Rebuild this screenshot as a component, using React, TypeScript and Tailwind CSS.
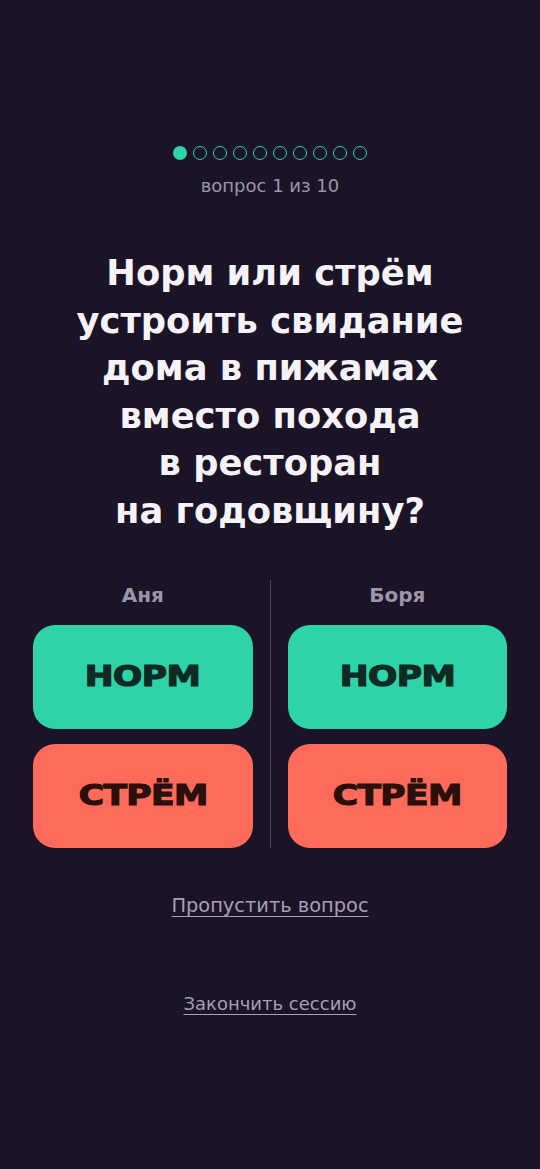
import React from "react";

const Btn = ({ label, kind }: { label: string; kind: "ok" | "no" }) => (
  <button
    className={
      kind === "ok"
        ? "h-[104px] w-full rounded-[22px] bg-[#2ed3a9] text-[#0f2a22] flex items-center justify-center"
        : "h-[104px] w-full rounded-[22px] bg-[#ff6b5b] text-[#2b0f0b] flex items-center justify-center"
    }
  >
    <span
      className="inline-block scale-x-[1.19] text-[29px] font-bold tracking-[-0.5px] [-webkit-text-stroke:1.2px_currentColor]"
      style={{ fontFamily: '"DejaVu Sans", sans-serif' }}
    >
      {label}
    </span>
  </button>
);

const Column = ({ name }: { name: string }) => (
  <div className="flex flex-col">
    <div className="h-[45px] flex items-start justify-center pt-[3px] text-[20px] leading-[24px] font-bold text-[#9d95aa]">
      {name}
    </div>
    <div className="flex flex-col gap-[15px]">
      <Btn label="НОРМ" kind="ok" />
      <Btn label="СТРЁМ" kind="no" />
    </div>
  </div>
);

export default function App() {
  return (
    <div
      className="min-h-[1169px] w-full bg-[#1a1426] flex flex-col items-center"
      style={{ fontFamily: '"DejaVu Sans", sans-serif' }}
    >
      <div className="mt-[146px] flex gap-[6px]">
        {Array.from({ length: 10 }).map((_, i) => (
          <div
            key={i}
            className={
              i === 0
                ? "h-[14px] w-[14px] rounded-full bg-[#2ed3a9]"
                : "h-[14px] w-[14px] rounded-full border-[1.5px] border-[#2ed3a9]"
            }
          />
        ))}
      </div>
      <div className="mt-[15px] text-[18px] leading-[22px] text-[#9d95aa]">вопрос 1 из 10</div>
      <h1 className="mt-[52px] text-center text-[35.3px] leading-[47.5px] font-bold text-[#f5f2f8]">
        Норм или стрём
        <br />
        устроить свидание
        <br />
        дома в пижамах
        <br />
        вместо похода
        <br />
        в ресторан
        <br />
        на годовщину?
      </h1>
      <div className="mt-[46px] w-full px-[33px] grid grid-cols-[1fr_1px_1fr] gap-x-[17px]">
        <Column name="Аня" />
        <div className="bg-[#4a4358] w-px" />
        <Column name="Боря" />
      </div>
      <div className="mt-[46px] text-[19.4px] leading-[24px] text-[#a79fb5] underline underline-offset-[4px] decoration-1">
        Пропустить вопрос
      </div>
      <div className="mt-[74px] text-[18px] leading-[24px] text-[#a79fb5] underline underline-offset-[4px] decoration-1">
        Закончить сессию
      </div>
    </div>
  );
}
